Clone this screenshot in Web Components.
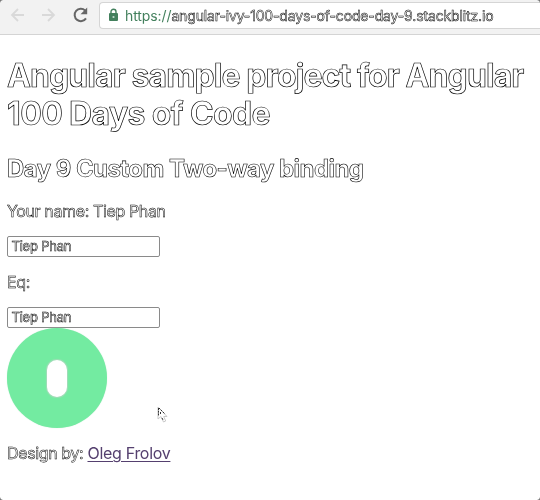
<!DOCTYPE html>
<html lang="en">
<head>
<meta charset="utf-8">
<title>Angular 100 Days of Code</title>
<style>
html,body{margin:0;height:100%;background:#fff;overflow:hidden}
body{font-family:Inter,"Liberation Sans",sans-serif;color:#333}
</style>
</head>
<body>
<demo-window></demo-window>
<script>
const define = (name, html) => customElements.define(name, class extends HTMLElement {
  connectedCallback() {
    if (this.shadowRoot) return;
    const t = document.createElement('template');
    t.innerHTML = html;
    this.attachShadow({mode: 'open'}).append(t.content.cloneNode(true));
  }
});

define('browser-bar', `
<style>
:host{display:flex;box-sizing:border-box;height:35px;background:#f2f2f2;border-bottom:1px solid #d4d4d4;padding:2px 0 6px 9px;align-items:center}
svg{display:block;flex:none}
.nav{margin-right:14px}
.address{flex:1;display:flex;align-items:center;box-sizing:border-box;height:27px;margin-left:9px;padding-left:8px;background:#fff;border:1px solid #d5d5d5;border-right:0;border-radius:4px 0 0 4px;font-size:14px;white-space:nowrap}
.reload{margin-left:-1px}
.scheme{color:#43805d;margin-left:6px;letter-spacing:-.1px}
.host{color:#fff;-webkit-text-stroke:.5px #000;letter-spacing:-.14px}
</style>
<svg class="nav" width="18" height="18" fill="none" stroke="#d9d9d9" stroke-width="1.8"><path d="M15 9H3M9 3L3 9l6 6"/></svg>
<svg class="nav" width="18" height="18" fill="none" stroke="#d9d9d9" stroke-width="1.8"><path d="M1 9h12M7 3l6 6-6 6"/></svg>
<svg class="reload" width="18" height="18"><path d="M14 12.4A6.2 6.2 0 1 1 13.1 4.4" fill="none" stroke="#666" stroke-width="2"/><path d="M15.2 1.6v6.7H8.5z" fill="#666"/></svg>
<div class="address">
<svg width="11" height="14"><path d="M3 6V3.7a2.5 2.5 0 0 1 5 0V6" fill="none" stroke="#43805d" stroke-width="1.4"/><rect x="1" y="5" width="9" height="8" rx="1" fill="#43805d"/><circle cx="5.5" cy="9" r="1.1" fill="#c5dccf"/></svg>
<span class="scheme">https://</span><span class="host">angular-ivy-100-days-of-code-day-9.stackblitz.io</span>
</div>`);

define('outlined-heading', `
<style>
:host{display:block;color:#fff;font-weight:700;-webkit-text-stroke:.6px #000;white-space:nowrap}
:host([level="1"]){font-size:32px;line-height:38px;margin-top:22px;letter-spacing:-.91px;-webkit-text-stroke-width:.7px}
:host([level="2"]){font-size:24px;line-height:28px;margin-top:22px;letter-spacing:-.56px}
</style><slot></slot>`);

define('text-line', `
<style>
:host{display:block;font-size:16px;line-height:20px;letter-spacing:-.37px;white-space:nowrap;color:#fff;-webkit-text-stroke:.5px #000}
</style><slot></slot>`);

define('text-box', `
<style>
:host{display:block;box-sizing:border-box;width:153px;height:21px;border:1px solid #8a8a8a;border-radius:2px;padding-left:3.5px;font-size:13px;line-height:19px;letter-spacing:-.22px;background:#fff}
span{color:#fff;-webkit-text-stroke:.5px #000}
</style><span><slot></slot></span>`);

define('toggle-disc', `
<style>
:host{display:grid;place-items:center;width:100px;height:100px;border-radius:50%;background:#73eba1;box-shadow:0 0 1px #b9e5ca}
i{display:block;width:20px;height:37px;border-radius:10px;background:#fff;box-shadow:0 0 1px 1px #a2dcb8}
</style><i></i>`);

define('visited-link', `
<style>
:host{display:inline;color:#55406f;letter-spacing:-.3px;-webkit-text-stroke:0}
a{color:inherit;text-decoration:underline;text-decoration-thickness:1px;text-underline-offset:2px}
</style><a href="#"><slot></slot></a>`);

define('mouse-pointer', `
<style>:host{display:block;position:absolute;left:155px;top:405px}svg{display:block}</style>
<svg width="13" height="20"><path d="M3 2v12l3-2.5 2.5 5.5 2.2-1-2-4.5H12z" fill="#fff" stroke="#c8c8c8" stroke-width="1"/><path d="M3.5 3v8M5.5 7v2M4 3l6 6M7 13l1 2" stroke="#333" stroke-dasharray="2 .7" fill="none"/></svg>`);

define('demo-window', `
<style>
:host{display:block;position:relative;width:540px;height:500px;overflow:hidden}
.page{width:540px;height:500px;will-change:transform}
main{display:flex;flex-direction:column;padding-left:7px}
.wider{letter-spacing:-.62px}
.name{margin-top:18px}.box{margin-top:15px}.eq{margin-top:15px}.second{margin-top:15px}.design{margin-top:15px}
.corner{position:absolute;width:3px;height:3px}
.tl{left:0;top:0;background:radial-gradient(circle at 100% 100%,transparent 2.4px,#777 3.2px)}
.tr{right:0;top:0;background:radial-gradient(circle at 0 100%,transparent 2.4px,#777 3.2px)}
.bl{left:0;bottom:0;background:radial-gradient(circle at 100% 0,transparent 2.4px,#777 3.2px)}
.br{right:0;bottom:0;background:radial-gradient(circle at 0 0,transparent 2.4px,#777 3.2px)}
</style>
<div class="page">
<browser-bar></browser-bar>
<main>
<outlined-heading level="1" role="heading" aria-level="1">Angular sample project for Angular<br><span class="wider">100 Days of Code</span></outlined-heading>
<outlined-heading level="2" role="heading" aria-level="2">Day 9 Custom Two-way binding</outlined-heading>
<text-line class="name">Your name: Tiep Phan</text-line>
<text-box class="box">Tiep Phan</text-box>
<text-line class="eq">Eq:</text-line>
<text-box class="second">Tiep Phan</text-box>
<toggle-disc></toggle-disc>
<text-line class="design">Design by: <visited-link>Oleg Frolov</visited-link></text-line>
</main>
<mouse-pointer></mouse-pointer>
<i class="corner tl"></i><i class="corner tr"></i><i class="corner bl"></i><i class="corner br"></i>
</div>`);
</script>
</body>
</html>
